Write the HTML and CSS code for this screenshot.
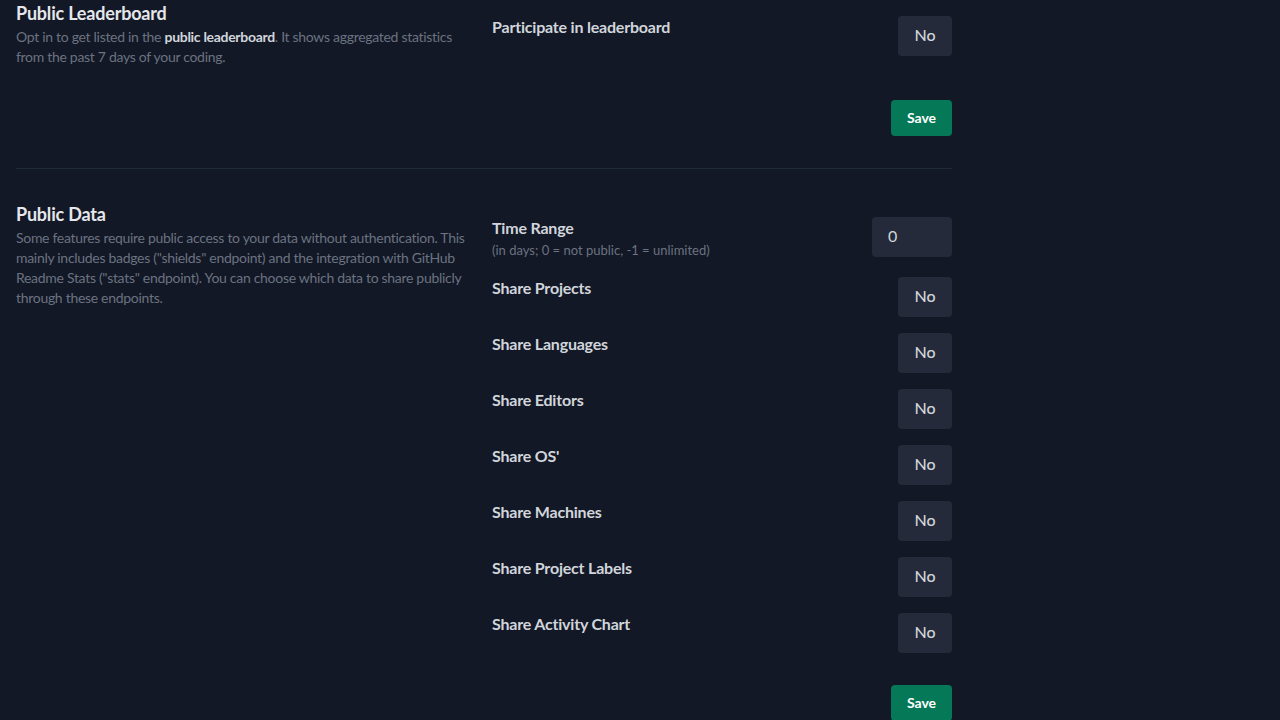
FILE: index.html
```html
<!DOCTYPE html>
<html>
<head>
<meta charset="utf-8">
<link rel="stylesheet" href="styles.css">
</head>
<body>
<main class="page">
  <section class="section">
    <div class="grid">
      <div class="intro">
        <h2 class="title">Public Leaderboard</h2>
        <p class="desc">Opt in to get listed in the <strong>public leaderboard</strong>. It shows aggregated statistics from the past 7 days of your coding.</p>
      </div>
      <div class="fields">
        <div class="row">
          <div class="label">Participate in leaderboard</div>
          <button class="select">No</button>
        </div>
      </div>
    </div>
    <div class="actions"><button class="save">Save</button></div>
  </section>
  <hr class="divider">
  <section class="section">
    <div class="grid">
      <div class="intro">
        <h2 class="title">Public Data</h2>
        <p class="desc">Some features require public access to your data without authentication. This mainly includes badges ("shields" endpoint) and the integration with GitHub Readme Stats ("stats" endpoint). You can choose which data to share publicly through these endpoints.</p>
      </div>
      <div class="fields">
        <div class="row">
          <div>
            <div class="label">Time Range</div>
            <div class="sublabel">(in days; 0 = not public, -1 = unlimited)</div>
          </div>
          <div class="input">0</div>
        </div>
        <div class="row"><div class="label">Share Projects</div><button class="select">No</button></div>
        <div class="row"><div class="label">Share Languages</div><button class="select">No</button></div>
        <div class="row"><div class="label">Share Editors</div><button class="select">No</button></div>
        <div class="row"><div class="label">Share OS'</div><button class="select">No</button></div>
        <div class="row"><div class="label">Share Machines</div><button class="select">No</button></div>
        <div class="row"><div class="label">Share Project Labels</div><button class="select">No</button></div>
        <div class="row"><div class="label">Share Activity Chart</div><button class="select">No</button></div>
      </div>
    </div>
    <div class="actions"><button class="save">Save</button></div>
  </section>
  <hr class="divider">
</main>
</body>
</html>
```
FILE: styles.css
```css
html, body {
  margin: 0;
  padding: 0;
  background: #121826;
  font-family: Lato, "Noto Sans", sans-serif;
  overflow: hidden;
}
.page {
  width: 936px;
  margin: -1px 0 0 16px;
}
.grid {
  display: grid;
  grid-template-columns: 460px 460px;
  column-gap: 16px;
}
.intro {
  padding-bottom: 1px;
}
.title {
  margin: 0;
  font-size: 18px;
  line-height: 28px;
  font-weight: 700;
  color: #e5e7eb;
  letter-spacing: -0.2px;
}
.desc {
  margin: 0;
  font-size: 14px;
  line-height: 20px;
  color: #6b7280;
  letter-spacing: -0.3px;
}
.desc strong {
  color: #d1d5db;
  font-weight: 700;
}
.fields {
  padding-top: 17px;
  display: flex;
  flex-direction: column;
  gap: 16px;
}
.row {
  display: flex;
  justify-content: space-between;
  align-items: flex-start;
}
.label {
  font-size: 16px;
  line-height: 22px;
  font-weight: 700;
  color: #d1d5db;
  letter-spacing: -0.2px;
}
.sublabel {
  font-size: 13px;
  line-height: 22px;
  color: #6b7280;
}
.select {
  width: 54px;
  height: 40px;
  border: none;
  border-radius: 4px;
  background: #242a3a;
  color: #d1d5db;
  font-family: inherit;
  font-size: 16px;
  font-weight: 500;
  padding: 0 0 3px 0;
}
.input {
  width: 80px;
  height: 40px;
  box-sizing: border-box;
  border-radius: 4px;
  background: #242a3a;
  color: #d1d5db;
  font-size: 16px;
  line-height: 37px;
  padding-left: 16px;
}
.actions {
  display: flex;
  justify-content: flex-end;
  margin-top: 32px;
}
.save {
  width: 61px;
  height: 36px;
  border: none;
  border-radius: 4px;
  background: #047857;
  color: #ffffff;
  font-family: inherit;
  font-size: 14px;
  font-weight: 700;
  padding: 0 0 2px 0;
}
.divider {
  margin: 32px 0 31px 0;
  border: none;
  border-top: 1px solid #1e2a37;
  height: 0;
}
```
